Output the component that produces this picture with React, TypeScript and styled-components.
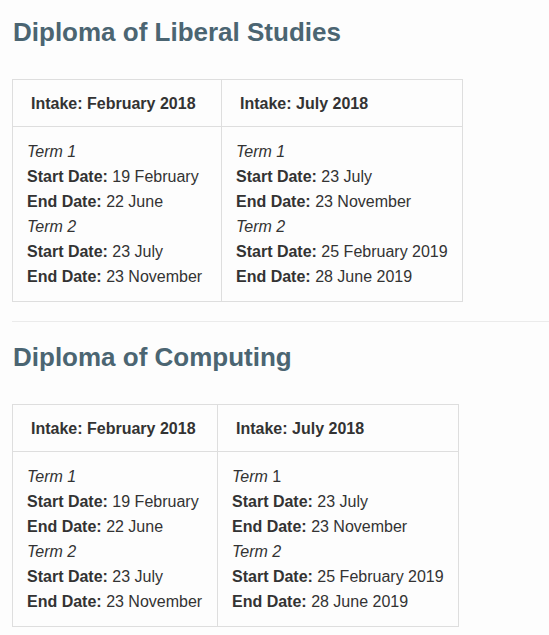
import React from "react";
import styled, { createGlobalStyle } from "styled-components";

const Global = createGlobalStyle`
  html, body { margin: 0; padding: 0; background: #fdfdfd; }
  body { font-family: "Liberation Sans", Arial, sans-serif; color: #333; }
`;

const Page = styled.div`
  padding: 17px 0 0 12px;
  display: flex;
  flex-direction: column;
  align-items: flex-start;
`;

const Heading = styled.h2`
  margin: 0 0 32px 1px;
  font-size: 26px;
  line-height: 30px;
  font-weight: bold;
  color: #4b6572;
`;

const Table = styled.table<{ $w: number }>`
  width: ${(p) => p.$w}px;
  border-collapse: collapse;
  table-layout: fixed;
  font-size: 16px;
  color: #333;
`;

const Col = styled.col<{ $w: number }>`
  width: ${(p) => p.$w}px;
`;

const Th = styled.th<{ $pl: number }>`
  border: 1px solid #dedede;
  height: 45px;
  padding: 1px 0 0 ${(p) => p.$pl}px;
  text-align: left;
  font-weight: bold;
  line-height: 20px;
`;

const Td = styled.td`
  border: 1px solid #dedede;
  padding: 12px 0 12px 14px;
  vertical-align: top;
  line-height: 25px;
  white-space: nowrap;
`;

const Line = styled.div``;

const Term = styled.em`
  font-style: italic;
`;

const Label = styled.strong`
  font-weight: bold;
`;

const Divider = styled.hr`
  align-self: stretch;
  border: none;
  border-top: 1px solid #ebebeb;
  margin: 19px 0 20px 0;
  height: 0;
`;

type TermData = { start: string; end: string };
type ColData = { intake: string; w: number; pl: number; terms: TermData[]; plainNum?: boolean };
type Course = { title: string; cols: ColData[] };

const courses: Course[] = [
  {
    title: "Diploma of Liberal Studies",
    cols: [
      { intake: "Intake: February 2018", w: 209, pl: 18, terms: [{ start: "19 February", end: "22 June" }, { start: "23 July", end: "23 November" }] },
      { intake: "Intake: July 2018", w: 241, pl: 18, terms: [{ start: "23 July", end: "23 November" }, { start: "25 February 2019", end: "28 June 2019" }] },
    ],
  },
  {
    title: "Diploma of Computing",
    cols: [
      { intake: "Intake: February 2018", w: 205, pl: 18, terms: [{ start: "19 February", end: "22 June" }, { start: "23 July", end: "23 November" }] },
      { intake: "Intake: July 2018", w: 241, pl: 18, plainNum: true, terms: [{ start: "23 July", end: "23 November" }, { start: "25 February 2019", end: "28 June 2019" }] },
    ],
  },
];

function CourseBlock({ course }: { course: Course }) {
  const total = course.cols.reduce((s, c) => s + c.w, 0) + 1;
  return (
    <>
      <Heading>{course.title}</Heading>
      <Table $w={total}>
        <colgroup>
          {course.cols.map((c) => (
            <Col key={c.intake} $w={c.w} />
          ))}
        </colgroup>
        <thead>
          <tr>
            {course.cols.map((c) => (
              <Th key={c.intake} $pl={c.pl}>{c.intake}</Th>
            ))}
          </tr>
        </thead>
        <tbody>
          <tr>
            {course.cols.map((c) => (
              <Td key={c.intake}>
                {c.terms.map((t, i) => (
                  <React.Fragment key={i}>
                    <Line>
                      {c.plainNum && i === 0 ? (
                        <>
                          <Term>Term </Term>1
                        </>
                      ) : (
                        <Term>Term {i + 1}</Term>
                      )}
                    </Line>
                    <Line>
                      <Label>Start Date:</Label> {t.start}
                    </Line>
                    <Line>
                      <Label>End Date:</Label> {t.end}
                    </Line>
                  </React.Fragment>
                ))}
              </Td>
            ))}
          </tr>
        </tbody>
      </Table>
    </>
  );
}

export default function App() {
  return (
    <>
      <Global />
      <Page>
        <CourseBlock course={courses[0]} />
        <Divider />
        <CourseBlock course={courses[1]} />
      </Page>
    </>
  );
}
